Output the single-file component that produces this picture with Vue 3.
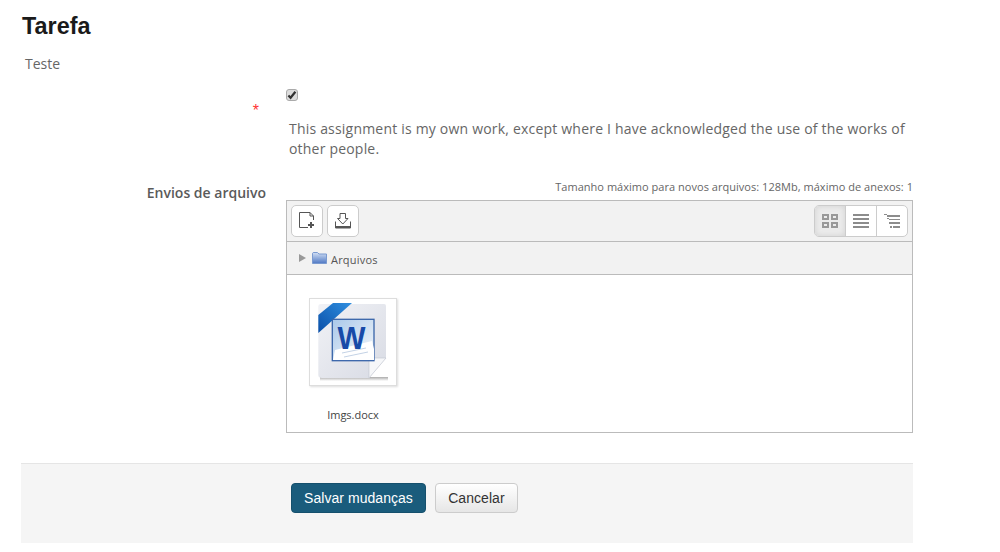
<script setup>
const fileName = 'Imgs.docx'
</script>

<template>
  <div class="page">
    <h2 class="title">Tarefa</h2>
    <p class="intro">Teste</p>

    <div class="row statement">
      <div class="label"><span class="req">*</span></div>
      <div class="field">
        <span class="check">
          <svg width="10" height="10" viewBox="0 0 10 10"><path d="M1.4 5.4 L3.6 7.8 L8.4 1.8" fill="none" stroke="#333" stroke-width="2.2"/></svg>
        </span>
        <p class="statement-text">This assignment is my own work, except where I have acknowledged the use of the works of other people.</p>
      </div>
    </div>

    <div class="row files">
      <div class="label"><span class="files-label">Envios de arquivo</span></div>
      <div class="field">
        <div class="limits">Tamanho máximo para novos arquivos: 128Mb, máximo de anexos: 1</div>
        <div class="manager">
          <div class="toolbar">
            <div class="tools">
              <button class="tool">
                <svg width="18" height="18" viewBox="0 0 18 18" fill="none" stroke="#555" stroke-width="1">
                  <path d="M10 15.500H1.500V0.500H12L15.500 4V8"/><path d="M12 0.500V4H15.500"/>
                  <path d="M13 10V16M10 13H16" stroke-width="2"/>
                </svg>
              </button>
              <button class="tool">
                <svg width="18" height="18" viewBox="0 0 18 18" fill="none" stroke="#555" stroke-width="1">
                  <path d="M6 1.500H11.500V6.500H14L8.800 12L3.500 6.500H6Z"/>
                  <path d="M1.500 9.500V16H16.500V9.500" /><path d="M2 15H16" stroke-width="2"/>
                </svg>
              </button>
            </div>
            <div class="views">
              <span class="view active">
                <svg width="16" height="14" viewBox="0 0 16 14" fill="none" stroke="#999" stroke-width="2"><rect x="1" y="1" width="5" height="4"/><rect x="10" y="1" width="5" height="4"/><rect x="1" y="9" width="5" height="4"/><rect x="10" y="9" width="5" height="4"/></svg>
              </span>
              <span class="view">
                <svg width="16" height="14" viewBox="0 0 16 14" fill="#8c8c8c"><rect y="0" width="16" height="2"/><rect y="4" width="16" height="2"/><rect y="8" width="16" height="2"/><rect y="12" width="16" height="2"/></svg>
              </span>
              <span class="view">
                <svg width="16" height="14" viewBox="0 0 16 14" fill="#8c8c8c"><rect x="0" y="0" width="3" height="1"/><rect x="3" y="1" width="13" height="2"/><rect x="3" y="4" width="2" height="1"/><rect x="5" y="5" width="11" height="1"/><rect x="5" y="8" width="11" height="2"/><rect x="6" y="12" width="2" height="2"/><rect x="9" y="12" width="7" height="2"/></svg>
              </span>
            </div>
          </div>
          <div class="path">
            <svg class="arrow" width="7" height="8" viewBox="0 0 7 8"><path d="M0 0L7 4L0 8Z" fill="#999"/></svg>
            <svg class="folder" width="15" height="12" viewBox="0 0 15 12">
              <defs><linearGradient id="fg" x1="0" y1="0" x2="0" y2="1"><stop offset="0" stop-color="#d3e0f4"/><stop offset="1" stop-color="#4f78c4"/></linearGradient></defs>
              <path d="M0.500 11.500V1.200L1.200 0.500H5.500L7 2H14.500V11.500Z" fill="url(#fg)" stroke="#7a9ad0"/>
            </svg>
            <span class="path-name">Arquivos</span>
          </div>
          <div class="area">
            <div class="file">
              <div class="thumb">
                <svg width="80" height="80" viewBox="0 0 80 80">
                  <defs>
                    <linearGradient id="pg" x1="0" y1="0" x2="1" y2="1"><stop offset="0" stop-color="#f1f2f6"/><stop offset="1" stop-color="#d8dbe4"/></linearGradient>
                    <linearGradient id="bg" x1="0" y1="0" x2="1" y2="1"><stop offset="0" stop-color="#a9c8ea"/><stop offset="0.7" stop-color="#dfeaf5"/><stop offset="1" stop-color="#f3f7fb"/></linearGradient>
                    <linearGradient id="rg" x1="0" y1="1" x2="1" y2="0"><stop offset="0" stop-color="#0a4fa8"/><stop offset="1" stop-color="#2f8fe0"/></linearGradient>
                    <linearGradient id="sg" x1="0" y1="0" x2="0" y2="1"><stop offset="0" stop-color="#888" stop-opacity="0.7"/><stop offset="1" stop-color="#888" stop-opacity="0"/></linearGradient>
                  </defs>
                  <rect x="6" y="74" width="68" height="4" fill="url(#sg)"/>
                  <path d="M7 1H70Q72 1 72 3V55L55 75H8Q4.300 75 4.300 72V3Q4.300 1 7 1Z" fill="url(#pg)"/>
                  <path d="M55 75L72 55H57.500Q55 55 55 58Z" fill="#f6f7f9" stroke="#c4c8d2" stroke-width="0.700"/>
                  <path d="M4.300 12L19 0H38L4.300 30Z" fill="url(#rg)"/>
                  <rect x="18.300" y="16.300" width="41.700" height="41.400" fill="url(#bg)" stroke="#3763a8" stroke-width="1.300"/>
                  <path d="M21 47L58 38L60 46V57H19Z" fill="#fff"/>
                  <path d="M28 50L52 45M30 54L54 49" stroke="#b4c6de" stroke-width="0.800"/>
                  <text x="23.500" y="46" class="w" textLength="28" lengthAdjust="spacingAndGlyphs">W</text>
                </svg>
              </div>
              <div class="file-name">{{ fileName }}</div>
            </div>
          </div>
        </div>
      </div>
    </div>

    <div class="actions">
      <button class="btn primary">Salvar mudanças</button>
      <button class="btn cancel">Cancelar</button>
    </div>
  </div>
</template>

<style>
html, body { margin: 0; background: #fff; }
</style>

<style scoped>
.page {
  width: 892px;
  padding-left: 21px;
  font-family: "Open Sans", sans-serif;
  color: #555;
}
.title {
  margin: 0;
  padding: 12px 0 0 1px;
  font: bold 23.4px/28px "Liberation Sans", sans-serif;
  color: #1a1a1a;
}
.intro {
  margin: 0;
  padding: 14px 0 0 4px;
  font-size: 14px;
  line-height: 20px;
  color: #666;
}
.row { display: flex; }
.label { width: 245px; text-align: right; flex: none; }
.field { margin-left: 20px; flex: 1; min-width: 0; }
.statement { padding-top: 14px; }
.req {
  display: block;
  margin: 15px 0 0;
  padding-right: 7px;
  font: 16px/16px "Liberation Sans", sans-serif;
  color: #f33;
}
.check {
  display: flex;
  align-items: center;
  justify-content: center;
  box-sizing: border-box;
  width: 12px;
  height: 12px;
  margin: 1px 0 0 0;
  background: #ddd;
  border: 1px solid #aaa;
  border-radius: 3px;
}
.statement-text {
  margin: 18px 0 0 3px;
  font-size: 14px;
  line-height: 20px;
  letter-spacing: 0.2px;
  color: #666;
}
.files { padding-top: 21px; }
.files-label { font-size: 14px; font-weight: 600; line-height: 20px; display: block; position: relative; top: 3px; color: #5a5a5a; }
.limits {
  text-align: right;
  font-size: 11px;
  line-height: 14px;
  letter-spacing: 0.03px;
  color: #666;
}
.manager {
  margin-top: 6px;
  box-sizing: border-box;
  height: 233px;
  border: 1px solid #bbb;
  display: flex;
  flex-direction: column;
}
.toolbar {
  display: flex;
  justify-content: space-between;
  align-items: center;
  height: 40px;
  padding: 0 4px;
  background: #f2f2f2;
  border-bottom: 1px solid #bbb;
}
.tools { display: flex; gap: 4px; }
.tool {
  box-sizing: border-box;
  width: 32px;
  height: 32px;
  padding: 0;
  display: flex;
  align-items: center;
  justify-content: center;
  background: #fff;
  border: 1px solid #ccc;
  border-radius: 5px;
}
.views {
  display: flex;
  border: 1px solid #ccc;
  border-radius: 5px;
  background: #fff;
  overflow: hidden;
}
.view {
  box-sizing: border-box;
  width: 31px;
  height: 30px;
  display: flex;
  align-items: center;
  justify-content: center;
  border-left: 1px solid #ccc;
}
.view:first-child { border-left: 0; width: 30px; }
.view.active { background: #ececec; box-shadow: inset 0 0 6px #d0d0d0; }
.path {
  display: flex;
  align-items: center;
  height: 32px;
  padding-left: 12px;
  background: #f2f2f2;
  border-bottom: 1px solid #bbb;
}
.arrow { margin-right: 6px; }
.folder { margin-right: 4px; }
.path-name { font-size: 11px; color: #555; letter-spacing: 0.2px; padding-top: 2px; }
.area { flex: 1; padding: 23px 0 0 22px; background: #fff; }
.file { width: 90px; }
.thumb {
  box-sizing: border-box;
  width: 88px;
  height: 88px;
  padding: 4px;
  border: 1px solid #ddd;
  box-shadow: 1px 1px 2px #ddd;
  background: #fff;
}
.thumb svg { display: block; }
.w { font: bold 32px "Liberation Sans", sans-serif; fill: #174aa8; }
.file-name {
  margin-top: 21px;
  text-align: center;
  width: 88px;
  font-size: 11px;
  line-height: 16px;
  color: #444;
}
.actions {
  margin-top: 30px;
  box-sizing: border-box;
  height: 80px;
  padding: 19px 0 0 270px;
  display: flex;
  align-items: flex-start;
  gap: 9px;
  background: #f5f5f5;
  border-top: 1px solid #e5e5e5;
}
.btn {
  box-sizing: border-box;
  height: 30px;
  padding: 0 12px;
  font: 14px "Liberation Sans", sans-serif;
  letter-spacing: 0.05px;
  color: #333;
  background: linear-gradient(#fff, #e6e6e6);
  border: 1px solid #ccc;
  border-radius: 4px;
}
.btn.cancel { width: 83px; }
.btn.primary {
  color: #fff;
  background: #1a5c7c;
  border-color: #15506d;
}
</style>
